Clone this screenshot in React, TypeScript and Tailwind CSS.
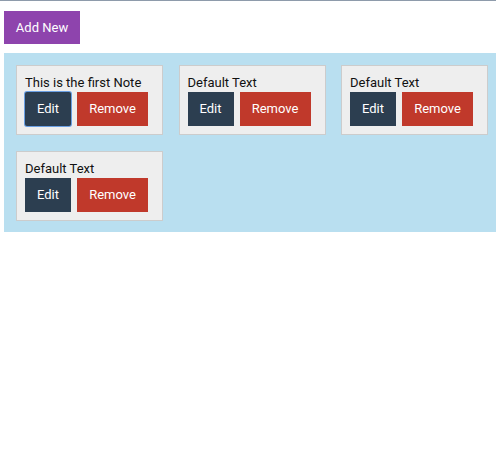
import React, { useState } from 'react';

type Note = { id: number; text: string };

const NoteCard = ({
  note,
  focused,
  onRemove,
}: {
  note: Note;
  focused: boolean;
  onRemove: (id: number) => void;
}) => {
  return (
    <div className="w-[147px] h-[70px] bg-[#eeeeee] border border-[#cccccc] pl-2 pt-2">
      <div className="text-[13px] leading-[18px] text-[#111111]">{note.text}</div>
      <div className="flex gap-[6px]">
        <button
          className={`h-[34px] w-[46px] bg-[#2c3e50] text-white text-[13px] ${
            focused ? 'rounded-[2px] shadow-[0_0_0_1px_#6a9fe3]' : ''
          }`}
        >
          Edit
        </button>
        <button
          className="h-[34px] w-[71px] bg-[#c0392b] text-white text-[13px]"
          onClick={() => onRemove(note.id)}
        >
          Remove
        </button>
      </div>
    </div>
  );
};

const App = () => {
  const [notes, setNotes] = useState<Note[]>([
    { id: 1, text: 'This is the first Note' },
    { id: 2, text: 'Default Text' },
    { id: 3, text: 'Default Text' },
    { id: 4, text: 'Default Text' },
  ]);

  const addNote = () => {
    setNotes([...notes, { id: Date.now(), text: 'Default Text' }]);
  };

  const removeNote = (id: number) => {
    setNotes(notes.filter((n) => n.id !== id));
  };

  return (
    <div className="min-h-[474px] bg-white border-t border-[#8e9bab] font-['Roboto',sans-serif]">
      <div className="pl-1 pt-[10px]">
        <button
          className="h-[33px] w-[76px] bg-[#8e44ad] text-white text-[13px]"
          onClick={addNote}
        >
          Add New
        </button>
      </div>
      <div className="ml-1 mt-[9px] bg-[#b9dff0] pl-3 pt-3 pb-[11px] flex flex-wrap gap-x-[15.5px] gap-y-4">
        {notes.map((note, i) => (
          <NoteCard key={note.id} note={note} focused={i === 0} onRemove={removeNote} />
        ))}
      </div>
    </div>
  );
};

export default App;
